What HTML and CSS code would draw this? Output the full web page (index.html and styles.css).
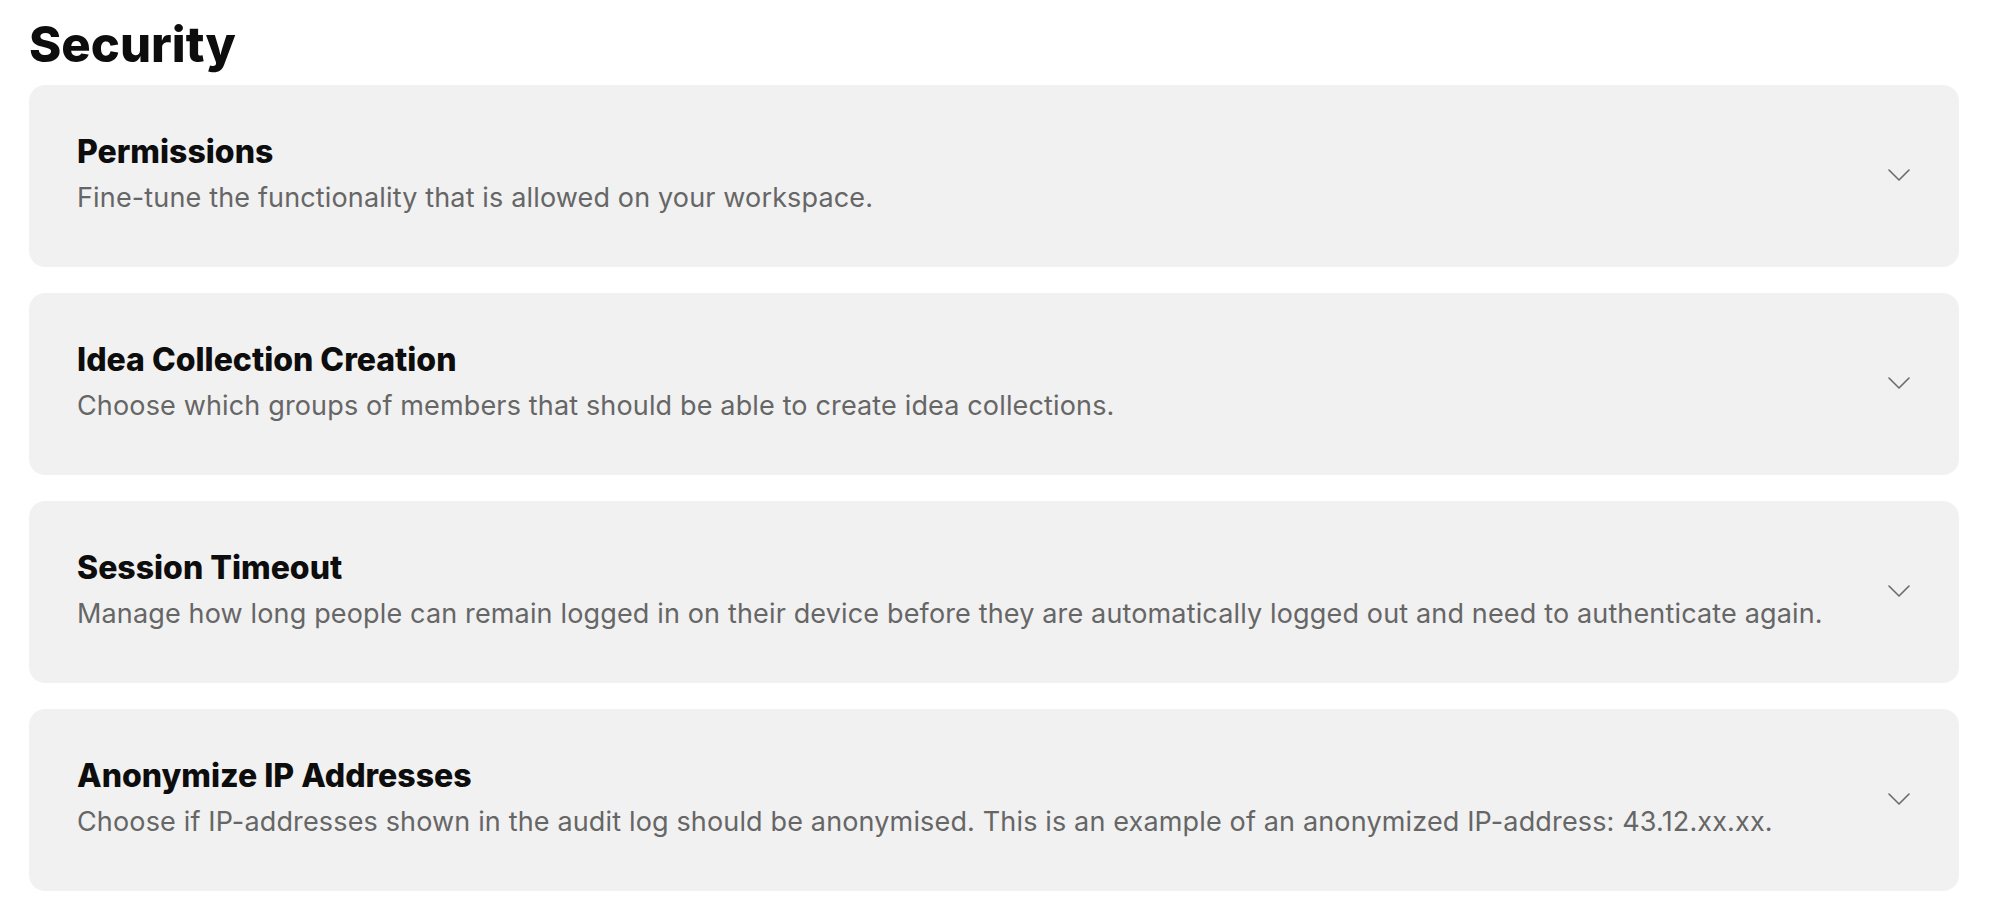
FILE: index.html
```html
<!DOCTYPE html>
<html lang="en">
<head>
<meta charset="utf-8">
<title>Security</title>
<link rel="stylesheet" href="styles.css">
</head>
<body>
<main class="page">
  <h1 class="page-title">Security</h1>
  <div class="list">
    <section class="card">
      <div class="card-text">
        <h2 class="card-title">Permissions</h2>
        <p class="card-desc">Fine-tune the functionality that is allowed on your workspace.</p>
      </div>
      <svg class="chevron" viewBox="0 0 22 12" width="22" height="12"><path d="M1 1 L11 11 L21 1"/></svg>
    </section>
    <section class="card">
      <div class="card-text">
        <h2 class="card-title">Idea Collection Creation</h2>
        <p class="card-desc">Choose which groups of members that should be able to create idea collections.</p>
      </div>
      <svg class="chevron" viewBox="0 0 22 12" width="22" height="12"><path d="M1 1 L11 11 L21 1"/></svg>
    </section>
    <section class="card">
      <div class="card-text">
        <h2 class="card-title">Session Timeout</h2>
        <p class="card-desc">Manage how long people can remain logged in on their device before they are automatically logged out and need to authenticate again.</p>
      </div>
      <svg class="chevron" viewBox="0 0 22 12" width="22" height="12"><path d="M1 1 L11 11 L21 1"/></svg>
    </section>
    <section class="card">
      <div class="card-text">
        <h2 class="card-title">Anonymize IP Addresses</h2>
        <p class="card-desc">Choose if IP-addresses shown in the audit log should be anonymised. This is an example of an anonymized IP-address: 43.12.xx.xx.</p>
      </div>
      <svg class="chevron" viewBox="0 0 22 12" width="22" height="12"><path d="M1 1 L11 11 L21 1"/></svg>
    </section>
  </div>
</main>
</body>
</html>
```
FILE: styles.css
```css
html, body {
  margin: 0;
  padding: 0;
  background: #ffffff;
}
body {
  font-family: Inter, "Liberation Sans", sans-serif;
  color: #111111;
}
.page {
  padding: 16px 37px 24px 29px;
}
.page-title {
  margin: 0 0 11px 0;
  font-size: 49px;
  line-height: 58px;
  font-weight: 800;
  color: #0d0d0d;
}
.list {
  display: flex;
  flex-direction: column;
  gap: 26px;
}
.card {
  display: flex;
  align-items: center;
  background: #f1f1f1;
  border-radius: 16px;
  padding: 49px 49px 53px 48px;
}
.card-text {
  flex: 1;
  min-width: 0;
}
.card-title {
  margin: 0;
  font-size: 32px;
  line-height: 36px;
  font-weight: 800;
  color: #0d0d0d;
}
.card-desc {
  margin: 12px 0 0 0;
  font-size: 27px;
  line-height: 32px;
  font-weight: 400;
  letter-spacing: 0.15px;
  color: #666666;
}
.chevron {
  flex: none;
  margin-top: 2px;
  fill: none;
  stroke: #6b6b6b;
  stroke-width: 1.6;
  stroke-linecap: round;
  stroke-linejoin: round;
}
```
